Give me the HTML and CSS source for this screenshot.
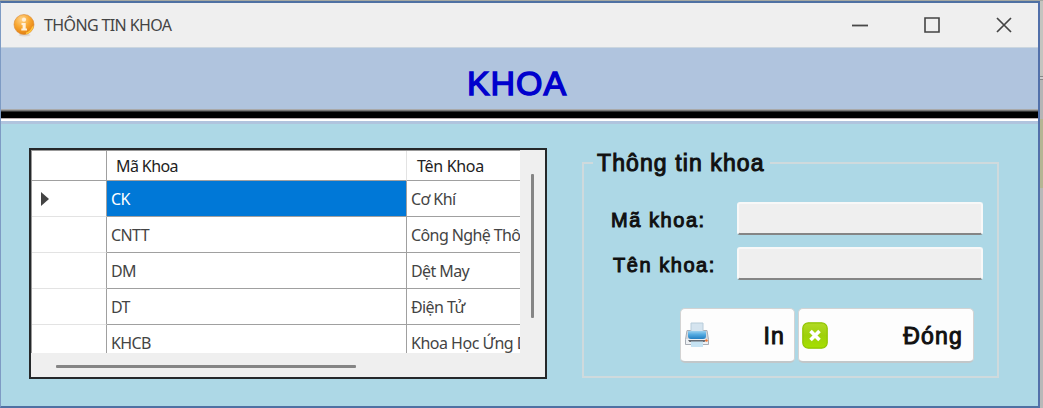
FILE: index.html
```html
<!DOCTYPE html>
<html lang="vi">
<head>
<meta charset="utf-8">
<title>THÔNG TIN KHOA</title>
<link rel="stylesheet" href="styles.css">
</head>
<body>
<div class="window">
  <header class="titlebar">
    <svg class="app-icon" width="22" height="24" viewBox="0 0 22 24">
      <defs>
        <radialGradient id="orb" cx=".4" cy=".25" r=".8"><stop offset="0" stop-color="#ffd48c"/><stop offset=".5" stop-color="#f8a62f"/><stop offset="1" stop-color="#e07a0c"/></radialGradient>
      </defs>
      <ellipse cx="11.500" cy="21" rx="6" ry="1.500" fill="#ddd8d4"/>
      <circle cx="11" cy="10.500" r="10" fill="url(#orb)" stroke="#d98a35" stroke-width=".6"/>
      <circle cx="11" cy="5.700" r="2.100" fill="#fff0da"/>
      <path d="M8.500 9h4.200v5.500h1.300v2H8.300v-2h1.300V11H8.500z" fill="#fff0da"/>
      <path d="M13 19.500q5-1.500 7-7" stroke="#ffc840" stroke-width="1.500" fill="none"/>
    </svg>
    <span class="caption">THÔNG TIN KHOA</span>
    <div class="controls">
      <svg width="16" height="16" viewBox="0 0 16 16"><path d="M0 8.500H16" stroke="#484848" stroke-width="1.800"/></svg>
      <svg width="16" height="16" viewBox="0 0 16 16"><path d="M1 1H15V15H1z" fill="none" stroke="#444" stroke-width="1.600"/></svg>
      <svg width="16" height="16" viewBox="0 0 16 16"><path d="M1 1L15 15M15 1L1 15" stroke="#444" stroke-width="1.700"/></svg>
    </div>
  </header>
  <div class="banner"><h1>KHOA</h1></div>
  <div class="divider"></div>
  <main class="content">
    <section class="grid">
      <div class="grid-view">
        <div class="row head"><div class="mark"></div><div class="code">Mã Khoa</div><div class="name">Tên Khoa</div></div>
        <div class="row selected"><div class="mark"><svg width="8" height="14" viewBox="0 0 8 14"><path d="M0 0L8 7L0 14z" fill="#444"/></svg></div><div class="code">CK</div><div class="name">Cơ Khí</div></div>
        <div class="row"><div class="mark"></div><div class="code">CNTT</div><div class="name">Công Nghệ Thông Tin</div></div>
        <div class="row"><div class="mark"></div><div class="code">DM</div><div class="name">Dệt May</div></div>
        <div class="row"><div class="mark"></div><div class="code">DT</div><div class="name">Điện Tử</div></div>
        <div class="row last"><div class="mark"></div><div class="code">KHCB</div><div class="name">Khoa Học Ứng Dụng</div></div>
      </div>
      <div class="vscroll"><div class="thumb"></div></div>
      <div class="hscroll"><div class="thumb"></div></div>
    </section>
    <fieldset class="group">
      <legend>Thông tin khoa</legend>
      <div class="field"><label class="label-code" for="ma">Mã khoa:</label><input id="ma" readonly></div>
      <div class="field"><label class="label-name" for="ten">Tên khoa:</label><input id="ten" readonly></div>
      <div class="actions">
        <button class="print">
          <svg width="26" height="26" viewBox="0 0 26 26">
            <defs><linearGradient id="tray" x2="0" y2="1"><stop stop-color="#9cd1ef"/><stop offset=".4" stop-color="#58ade2"/><stop offset="1" stop-color="#237fc2"/></linearGradient></defs>
            <path d="M3 8.500h20l1.500 9v5h-23v-5z" fill="#d8dade" stroke="#a8adb5"/>
            <path d="M2 17h22v5H2z" fill="#edf0f3"/>
            <path d="M7 1h12v9H7z" fill="#d5e4ef" stroke="#b8ccda"/>
            <path d="M4 9h18v5q0 3-3 3H7q-3 0-3-3z" fill="url(#tray)"/>
            <path d="M4 18h18l-1.500 2H5.500z" fill="#666c74"/>
            <path d="M7 19.500h12V25H7z" fill="#c6e3f3"/>
            <circle cx="22.500" cy="18.500" r="1.300" fill="#f07532"/>
          </svg>
          <span>In</span>
        </button>
        <button class="close">
          <svg width="26" height="27" viewBox="0 0 26 27">
            <defs><linearGradient id="lime" x2="0" y2="1"><stop stop-color="#b2da25"/><stop offset=".5" stop-color="#9ed00b"/><stop offset="1" stop-color="#a5e000"/></linearGradient></defs>
            <rect x=".8" y=".8" width="24.400" height="25.400" rx="5.500" fill="url(#lime)" stroke="#8fc400" stroke-width="1.200"/>
            <path d="M8.500 9L17.500 18M17.500 9L8.500 18" stroke="#fff" stroke-width="3.600"/>
          </svg>
          <span>Đóng</span>
        </button>
      </div>
    </fieldset>
  </main>
</div>
<aside class="backdrop"></aside>
</body>
</html>
```
FILE: styles.css
```css
* { box-sizing: border-box; }
body { margin: 0; width: 1043px; height: 408px; overflow: hidden; display: flex; background: #a5a8a2; font-family: "Noto Sans", sans-serif; padding-top: 1px; }
.window { width: 1040px; height: 407px; border: solid #4f71a3; border-width: 2px 2px 2px 1px; border-right-color: #5270aa; border-left-color: #7e9bc4; display: flex; flex-direction: column; background: #add8e6; }
.backdrop { width: 3px; background: linear-gradient(#c4c4bf 0 75px, #888 75px 76px, #ccc 76px 78px, #888 78px 79px, #b5b5b5 79px 118px, #b5b594 118px 187px, #b8b8b8 187px); }
.titlebar { height: 45px; flex: none; background: #efefef; border-bottom: 1px solid #cbd6df; display: flex; align-items: center; padding: 0 26px 0 12px; }
.app-icon { margin-top: 2px; }
.caption { margin-left: 9px; font-size: 16px; line-height: 24px; color: #444; letter-spacing: -0.62px; }
.controls { margin-left: auto; display: flex; gap: 56px; }
.controls svg { display: block; }
.banner { height: 61px; flex: none; background: #b0c4de; display: flex; justify-content: center; padding: 16px 5px 0 0; }
h1 { margin: 0; font: 34px/38px "Liberation Sans", sans-serif; letter-spacing: .9px; -webkit-text-stroke: 1.4px #0000cd; color: #0000cd; }
.divider { height: 15px; flex: none; background: linear-gradient(#a9a9a9 0 1px, #777 1px 2px, #333 2px 3px, #000 3px 9px, #b9aeb0 9px 10px, #fff 10px 12px, #b0c4de 12px 15px); }
.content { flex: 1; display: flex; align-items: flex-start; gap: 35px; padding: 24px 0 0 28px; }
.grid { width: 518px; height: 231px; border: 2px solid #25282a; background: #efefef; display: grid; grid-template: 203px 24px / 489px 25px; }
.grid-view { overflow: hidden; background: #fff; border-left: 1px solid #999; border-top: 1px solid #999; font-size: 16px; color: #444; letter-spacing: -0.6px; }
.row { display: grid; grid-template: 36px / 75px 300px 250px; line-height: 36px; white-space: nowrap; }
.row > div { border-right: 1px solid #a0a0a0; border-bottom: 1px solid #a0a0a0; }
.row > .mark { border-bottom-color: #e3e3e3; display: flex; align-items: center; padding-left: 9px; }
.row .code, .row .name { padding-left: 4px; }
.row.head { grid-template-rows: 30px; line-height: 31px; color: #222; }
.row.head .code { padding-left: 9px; border-right-color: #e3e3e3; }
.row.head .name { padding-left: 10px; letter-spacing: -0.3px; }
.row.head > .mark { border-bottom-color: #a0a0a0; }
.row.last .name { letter-spacing: -0.5px; }
.selected .code { background: #0078d7; color: #fff; }
.vscroll { padding: 24px 0 0 11px; }
.vscroll .thumb { width: 3px; height: 144px; background: #858585; border-radius: 1px; }
.hscroll { grid-column: 1 / 3; padding: 12px 0 0 25px; }
.hscroll .thumb { width: 300px; height: 3px; background: #858585; border-radius: 1px; }
.group { margin: 1px 0 0; width: 417px; height: 229px; border: 2px solid #cfdadd; padding: 0 14px 0 27px; font-family: "Liberation Sans", sans-serif; -webkit-text-stroke: 1px #101010; color: #101010; }
legend { font-size: 23px; line-height: 26px; padding: 1px 5px 0 4px; margin-left: -18px; letter-spacing: 1.1px; }
.field { display: flex; align-items: center; height: 33px; margin-bottom: 12px; font-size: 20px; }
legend + .field { margin-top: 26px; }
.field label { width: 126px; line-height: 24px; letter-spacing: 1.55px; padding-top: 3px; }
.field .label-name { padding-left: 2px; }
.field input { width: 246px; height: 33px; background: #efefef; border: 2px solid #f8f8f8; border-bottom-color: #858585; border-radius: 3px; outline: none; }
.actions { display: flex; gap: 3px; margin: 28px 0 0 69px; }
.actions button { height: 55px; background: #fdfdfd; border: 1px solid #d3d3d3; border-bottom: 2px solid #c2c7c9; border-radius: 5px; font: 23px/28px "Liberation Sans", sans-serif; letter-spacing: 1.2px; -webkit-text-stroke: 1px #101010; color: #101010; display: flex; align-items: center; justify-content: space-between; }
.actions button span { padding-top: 2px; }
.print { width: 115px; padding: 0 9px 0 3px; }
.close { width: 176px; padding: 0 10px 0 3px; }
.actions svg { flex: none; }
```
